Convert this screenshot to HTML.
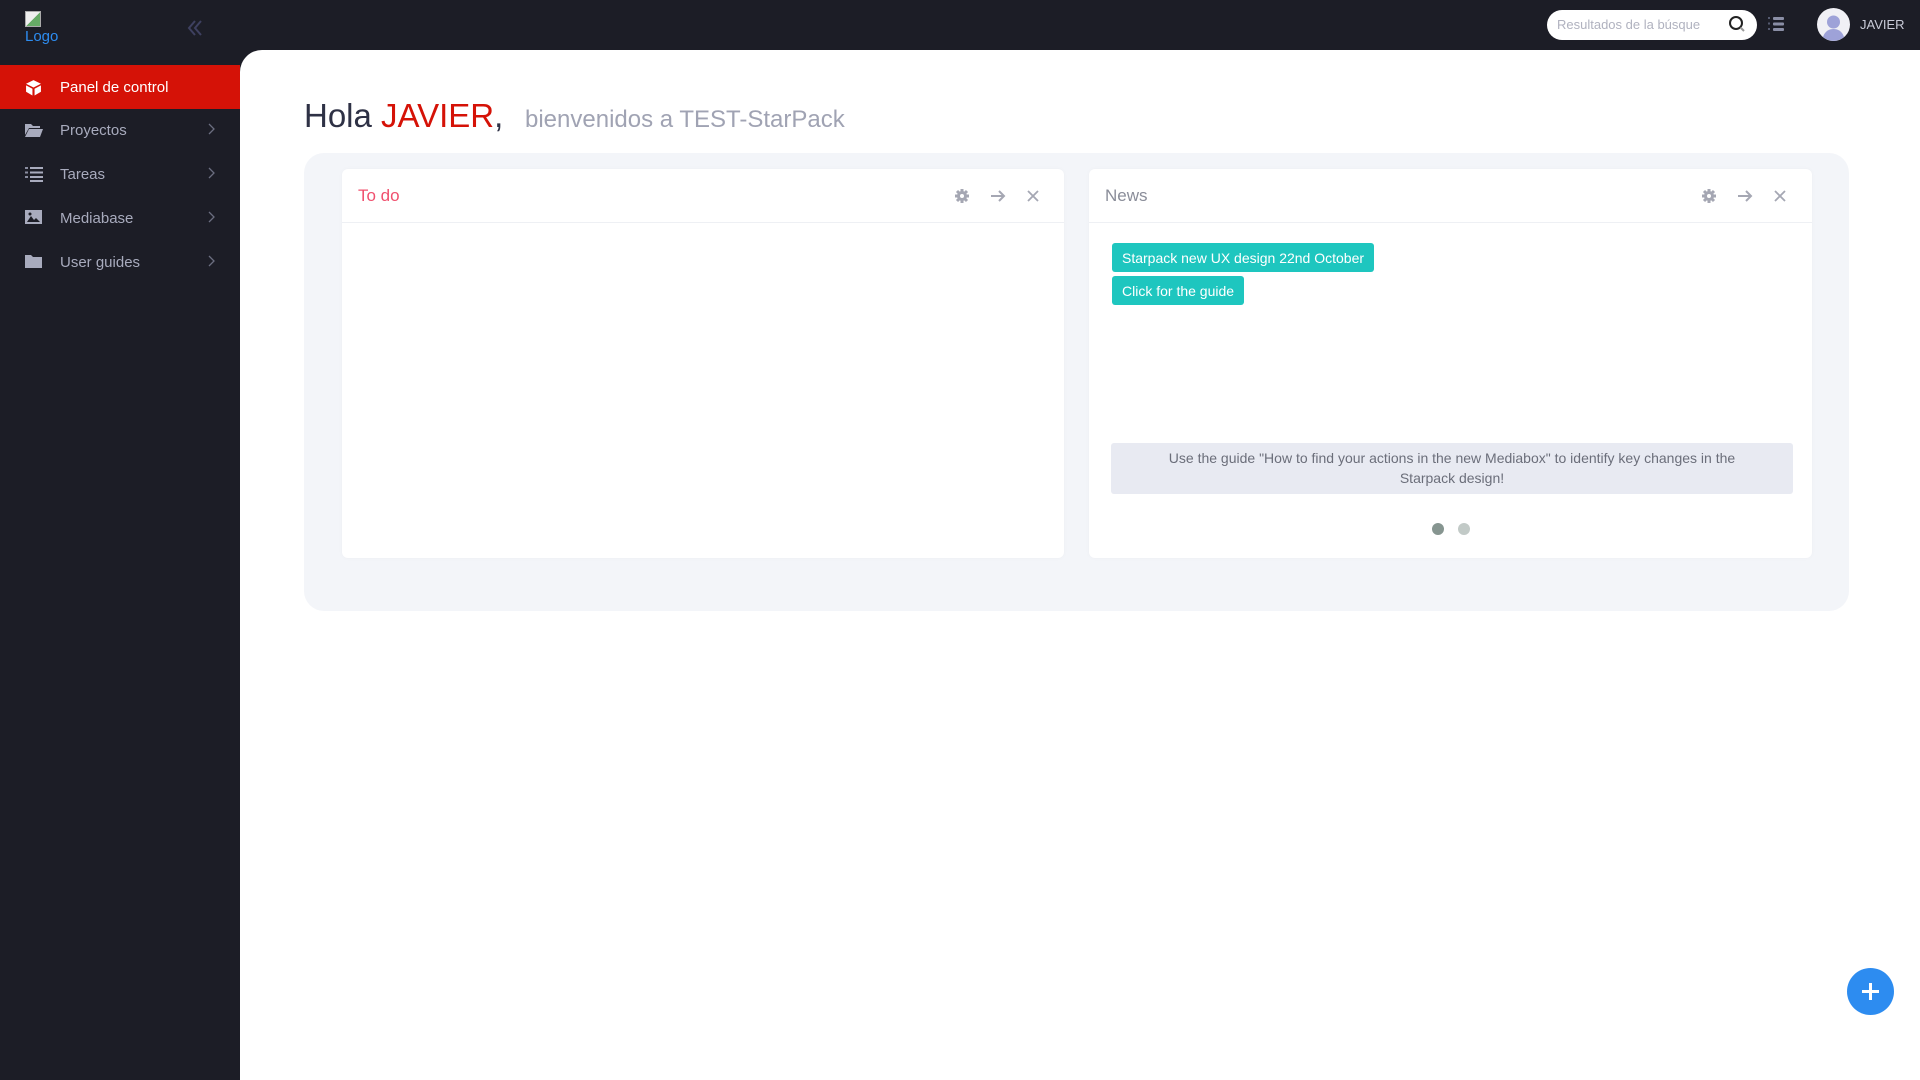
<!DOCTYPE html>
<html><head><meta charset="utf-8"><style>
*{box-sizing:border-box;margin:0;padding:0}
body{width:1920px;height:1080px;background:#1c1d26;font-family:"Liberation Sans",sans-serif;position:relative;overflow:hidden}
.abs{position:absolute}
.side a{position:absolute;left:0;width:240px;height:44px;display:flex;align-items:center;color:#a8abbd;font-size:15px}
.side a .ic{position:absolute;left:25px;top:14px}
.side a span.t{position:absolute;left:60px}
.side a .ch{position:absolute;left:208px;top:15px}
.main{left:240px;top:50px;width:1680px;height:1030px;background:#fff;border-top-left-radius:22px}
.card{background:#fff;border-radius:6px;position:absolute;top:169px;height:389px;box-shadow:0 0 4px rgba(0,0,0,.03)}
.card .hd{height:54px;border-bottom:1px solid #eef0f4;position:relative}
.card .hd .tt{position:absolute;left:16px;top:17px;font-size:17px}
.btn{position:absolute;left:23px;background:#1ec6bf;color:#fff;font-size:14px;border-radius:3px;padding:0 10px;display:flex;align-items:center}
</style></head><body>
<div class="abs" style="left:25px;top:11px;width:16px;height:16px;border:1px solid #aaa;background:linear-gradient(135deg,#eee 50%,#6a6 50%)"></div>
<div class="abs" style="left:25px;top:28px;color:#2d8cf0;font-size:15px">Logo</div>
<svg class="abs" style="left:186px;top:19px" width="20" height="18" viewBox="0 0 20 18"><path d="M9 2 3 9l6 7M15 2 9 9l6 7" stroke="#3e4060" stroke-width="2" fill="none"/></svg>
<div class="side">
<a style="top:65px;background:#d51207;color:#fff"><svg class="ic" width="17" height="17" viewBox="0 0 16 16"><path d="M8 1 15 4.5 8 8 1 4.5Z" fill="#fff"/><path d="M1 6v6l6 3.5V9.2ZM15 6v6l-6 3.5V9.2Z" fill="#fff"/></svg><span class="t">Panel de control</span></a>
<a style="top:108px"><svg class="ic" width="18" height="15" viewBox="0 0 18 15"><path d="M0 2h6l2 2h7v2H4L0 13Z M4 7h14l-3 8H0Z" fill="#a8abbd"/></svg><span class="t">Proyectos</span><svg class="ch" width="8" height="12"><path d="M1 1l5 5-5 5" stroke="#6b6e80" fill="none" stroke-width="1.3"/></svg></a>
<a style="top:152px"><svg class="ic" width="18" height="16" viewBox="0 0 18 16"><rect x="0" y="1" width="3" height="2" fill="#8a8da0"/><rect x="5" y="1" width="13" height="2" fill="#a8abbd"/><rect x="0" y="5.5" width="3" height="2" fill="#8a8da0"/><rect x="5" y="5.5" width="13" height="2" fill="#a8abbd"/><rect x="0" y="10" width="3" height="2" fill="#8a8da0"/><rect x="5" y="10" width="13" height="2" fill="#a8abbd"/><rect x="5" y="14" width="13" height="2" fill="#a8abbd"/></svg><span class="t">Tareas</span><svg class="ch" width="8" height="12"><path d="M1 1l5 5-5 5" stroke="#6b6e80" fill="none" stroke-width="1.3"/></svg></a>
<a style="top:196px"><svg class="ic" width="17" height="14" viewBox="0 0 17 14"><rect width="17" height="14" fill="#a8abbd"/><path d="M2 12 6 6l3 4 2-2 4 4Z" fill="#1c1d26"/><circle cx="5" cy="4" r="1.5" fill="#1c1d26"/></svg><span class="t">Mediabase</span><svg class="ch" width="8" height="12"><path d="M1 1l5 5-5 5" stroke="#6b6e80" fill="none" stroke-width="1.3"/></svg></a>
<a style="top:240px"><svg class="ic" width="17" height="14" viewBox="0 0 17 14"><path d="M0 1h6l2 2h9v11H0Z" fill="#a8abbd"/></svg><span class="t">User guides</span><svg class="ch" width="8" height="12"><path d="M1 1l5 5-5 5" stroke="#6b6e80" fill="none" stroke-width="1.3"/></svg></a>
</div>
<div class="abs" style="left:1547px;top:10px;width:210px;height:30px;background:#fff;border-radius:15px"></div>
<div class="abs" style="left:1557px;top:17px;font-size:13px;color:#b0b2bf">Resultados de la búsque</div>
<svg class="abs" style="left:1728px;top:15px" width="18" height="18" viewBox="0 0 18 18"><circle cx="8" cy="8" r="6" stroke="#222" stroke-width="2" fill="none"/><path d="M12.5 12.5 16 16" stroke="#999" stroke-width="2"/></svg>
<svg class="abs" style="left:1768px;top:16px" width="22" height="16" viewBox="0 0 22 16"><rect x="0" y="1" width="2" height="2" fill="#555a70"/><rect x="5" y="1" width="11" height="3" rx="1" fill="#8a8ea5"/><rect x="0" y="6.5" width="2" height="2" fill="#555a70"/><rect x="5" y="6.5" width="11" height="3" rx="1" fill="#8a8ea5"/><rect x="0" y="12" width="2" height="2" fill="#555a70"/><rect x="5" y="12" width="11" height="3" rx="1" fill="#8a8ea5"/></svg>
<svg class="abs" style="left:1817px;top:8px" width="33" height="33" viewBox="0 0 33 33"><circle cx="16.5" cy="16.5" r="16.5" fill="#f0f0f5"/><circle cx="16.5" cy="14" r="6.5" fill="#9ea2d8"/><path d="M6 29c2-6 6-8 10.5-8S25 23 27 29a16 16 0 0 1-21 0Z" fill="#9ea2d8"/></svg>
<div class="abs" style="left:1860px;top:17px;font-size:13px;color:#c9cbd8">JAVIER</div>
<div class="abs main"></div>
<div class="abs" style="left:304px;top:97px;font-size:33px;color:#2e3145">Hola <span style="color:#d51207">JAVIER</span>,</div>
<div class="abs" style="left:525px;top:106px;font-size:24px;color:#a0a3b3">bienvenidos a TEST-StarPack</div>
<div class="abs" style="left:304px;top:153px;width:1545px;height:458px;background:#f3f5f9;border-radius:20px"></div>
<div class="card" style="left:342px;width:722px">
<div class="hd"><div class="tt" style="color:#f0506e">To do</div></div>
</div>
<div class="card" style="left:1089px;width:723px">
<div class="hd"><div class="tt" style="color:#8a8d99">News</div></div>
<div class="btn" style="top:74px;height:29px">Starpack new UX design 22nd October</div>
<div class="btn" style="top:107px;height:29px">Click for the guide</div>
<div class="abs" style="left:22px;top:274px;width:682px;height:51px;background:#e8eaf2;border-radius:3px;color:#6b6e7a;font-size:14px;text-align:center;line-height:20px;padding:5px 30px">Use the guide "How to find your actions in the new Mediabox" to identify key changes in the Starpack design!</div>
<div class="abs" style="left:343px;top:354px;width:12px;height:12px;border-radius:50%;background:#869590"></div>
<div class="abs" style="left:369px;top:354px;width:12px;height:12px;border-radius:50%;background:#c2cac7"></div>
</div>
<svg width="0" height="0" style="position:absolute"><defs>
<g id="ico"><circle cx="8" cy="8" r="5" fill="#a5a7b3"/><g stroke="#a5a7b3" stroke-width="3"><path d="M8 1v14M1 8h14M3 3l10 10M13 3 3 13"/></g><circle cx="8" cy="8" r="2" fill="#fff"/>
<path d="M37 8h13M45 3l5 5-5 5" stroke="#a5a7b3" stroke-width="2" fill="none"/>
<path d="M74 3l10 10M84 3 74 13" stroke="#a5a7b3" stroke-width="1.8"/></g></defs></svg>
<svg class="abs" style="left:954px;top:188px" width="90" height="18"><use href="#ico"/></svg>
<svg class="abs" style="left:1701px;top:188px" width="90" height="18"><use href="#ico"/></svg>
<div class="abs" style="left:1847px;top:968px;width:47px;height:47px;border-radius:50%;background:#2d8cf0"></div>
<svg class="abs" style="left:1859px;top:980px" width="23" height="23"><path d="M11.5 3v17M3 11.5h17" stroke="#fff" stroke-width="3"/></svg>
</body></html>
